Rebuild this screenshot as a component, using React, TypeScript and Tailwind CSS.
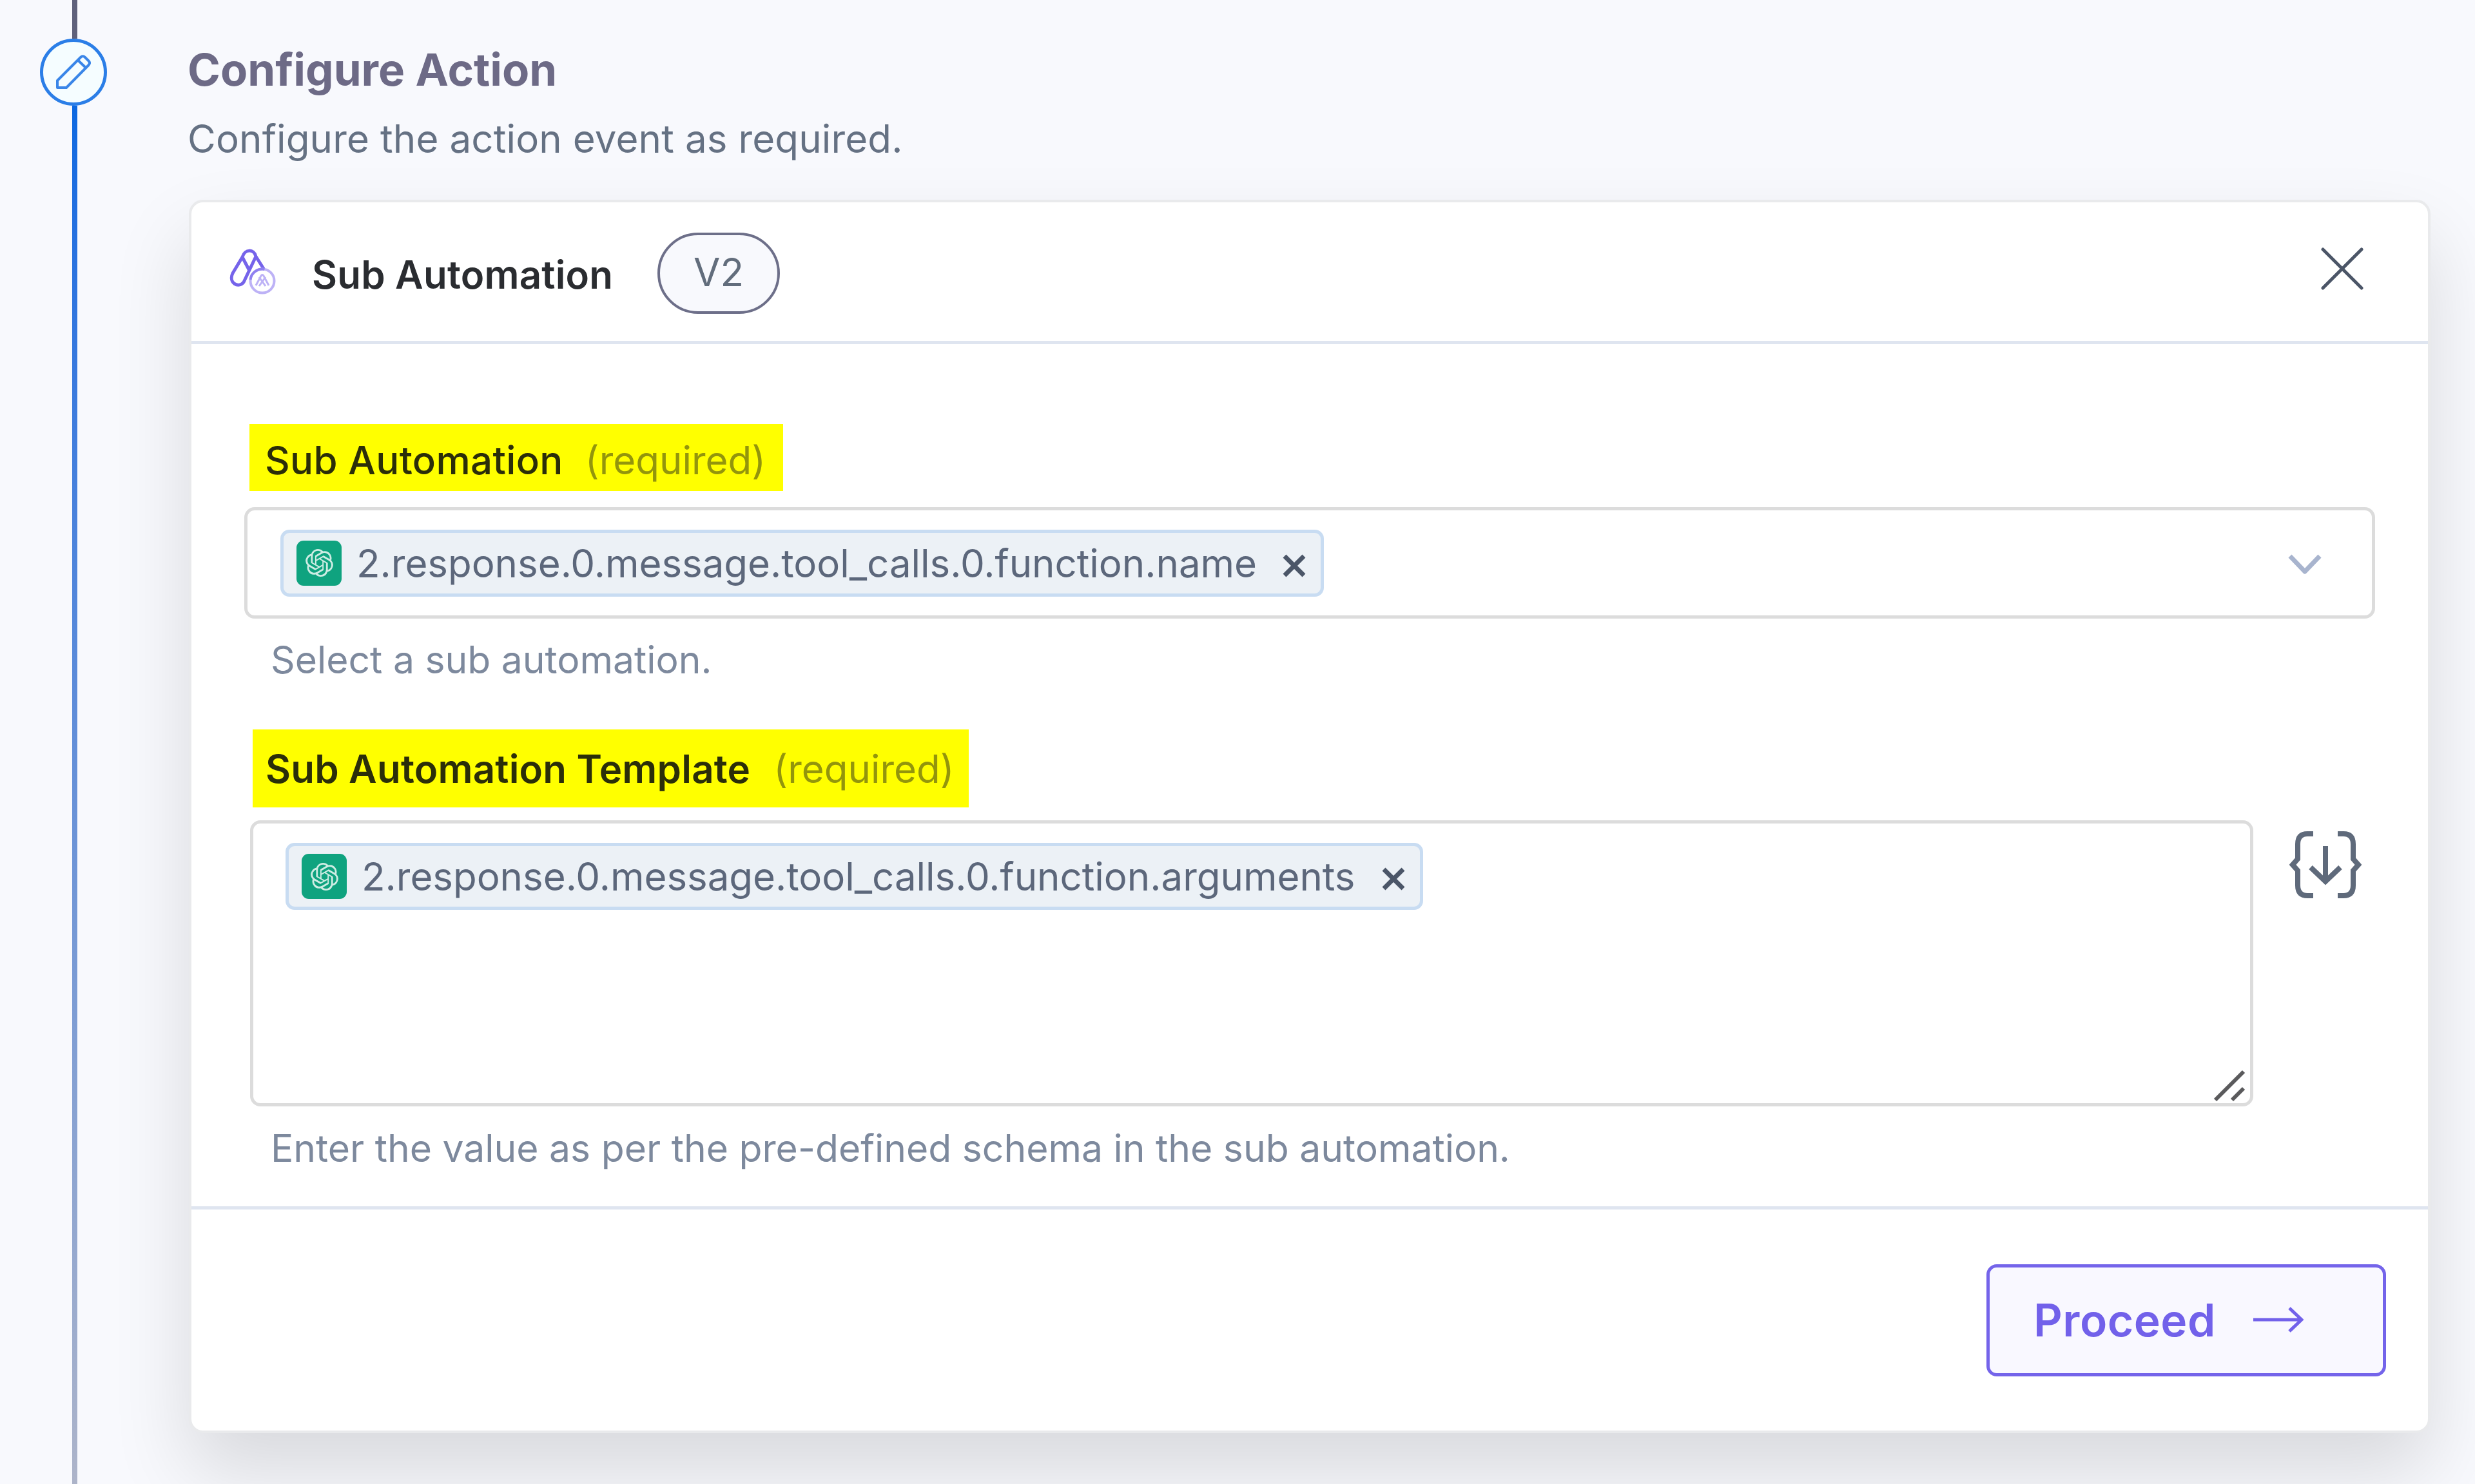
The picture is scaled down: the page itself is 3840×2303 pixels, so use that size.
import React from "react";

function PencilIcon() {
  return (
    <svg viewBox="0 0 54 54" className="h-[54px] w-[54px]" fill="none" stroke="#3a86e8" strokeWidth="4" strokeLinejoin="round">
      <path d="M2 51V40L38 4q3.500-3.500 7 0l5.500 5.500q3 3 0 6.500L16 51Z" />
      <path d="M34 8.500 46 20" />
    </svg>
  );
}

function AutomationIcon() {
  return (
    <svg viewBox="0 0 72 72" className="h-[72px] w-[72px] shrink-0" fill="none" stroke="#7563ea" strokeWidth="5">
      <path d="M20 13C24 0 38 0 41 12L53 31M20 13 5 38C-2 53 14 62 22 52L41 12M20 13 31 34" strokeLinejoin="round" />
      <g stroke="#bdb2f6">
        <circle cx="51" cy="50" r="18.500" strokeWidth="4" />
        <path d="M41 57l8-15q2-3 4 0l8 15M46 44l10 14M56 44l-10 14" strokeWidth="3" />
      </g>
      <path d="M32.500 48a18.500 18.500 0 0 1 22-16" stroke="#8f80f0" strokeWidth="4" />
    </svg>
  );
}

function OpenAIIcon() {
  return (
    <svg viewBox="0 0 24 24" className="h-[43px] w-[43px]" fill="#cdece3">
      <path d="M22.2819 9.8211a5.9847 5.9847 0 0 0-.5157-4.9108 6.0462 6.0462 0 0 0-6.5098-2.9A6.0651 6.0651 0 0 0 4.9807 4.1818a5.9847 5.9847 0 0 0-3.9977 2.9 6.0462 6.0462 0 0 0 .7427 7.0966 5.98 5.98 0 0 0 .511 4.9107 6.051 6.051 0 0 0 6.5146 2.9001A5.9847 5.9847 0 0 0 13.2599 24a6.0557 6.0557 0 0 0 5.7718-4.2058 5.9894 5.9894 0 0 0 3.9977-2.9001 6.0557 6.0557 0 0 0-.7475-7.0729zm-9.022 12.6081a4.4755 4.4755 0 0 1-2.8764-1.0408l.1419-.0804 4.7783-2.7582a.7948.7948 0 0 0 .3927-.6813v-6.7369l2.02 1.1686a.071.071 0 0 1 .038.052v5.5826a4.504 4.504 0 0 1-4.4945 4.4944zm-9.6607-4.1254a4.4708 4.4708 0 0 1-.5346-3.0137l.142.0852 4.783 2.7582a.7712.7712 0 0 0 .7806 0l5.8428-3.3685v2.3324a.0804.0804 0 0 1-.0332.0615L9.74 19.9502a4.4992 4.4992 0 0 1-6.1408-1.6464zM2.3408 7.8956a4.485 4.485 0 0 1 2.3655-1.9728V11.6a.7664.7664 0 0 0 .3879.6765l5.8144 3.3543-2.0201 1.1685a.0757.0757 0 0 1-.071 0l-4.8303-2.7865A4.504 4.504 0 0 1 2.3408 7.872zm16.5963 3.8558L13.1038 8.364 15.1192 7.2a.0757.0757 0 0 1 .071 0l4.8303 2.7913a4.4944 4.4944 0 0 1-.6765 8.1042v-5.6772a.79.79 0 0 0-.407-.667zm2.0107-3.0231l-.142-.0852-4.7735-2.7818a.7759.7759 0 0 0-.7854 0L9.409 9.2297V6.8974a.0662.0662 0 0 1 .0284-.0615l4.8303-2.7866a4.4992 4.4992 0 0 1 6.6802 4.66zM8.3065 12.863l-2.02-1.1638a.0804.0804 0 0 1-.038-.0567V6.0742a4.4992 4.4992 0 0 1 7.3757-3.4537l-.142.0805L8.704 5.459a.7948.7948 0 0 0-.3927.6813zm1.0976-2.3654l2.602-1.4998 2.6069 1.4998v2.9994l-2.5974 1.4997-2.6067-1.4997Z" />
    </svg>
  );
}

function VariableChip({ name, width }: { name: string; width: string }) {
  return (
    <div className={"flex h-[104px] items-center rounded-[14px] border-[5px] border-[#c8dcf2] bg-[#ecf1f6] pl-[20px] " + width}>
      <div className="flex h-[70px] w-[70px] shrink-0 items-center justify-center rounded-[11px] bg-[#0fa37f]">
        <OpenAIIcon />
      </div>
      <span className="ml-[23px] flex-1 whitespace-nowrap text-[60px] leading-[72px] tracking-[-0.03px] text-[#5c677b]">{name}</span>
      <svg viewBox="0 0 36 36" className="mr-[23px] mt-[8px] h-[36px] w-[36px] shrink-0" stroke="#4b5668" strokeWidth="7">
        <path d="M3 3 33 33M33 3 3 33" />
      </svg>
    </div>
  );
}

export default function App() {
  return (
    <div className="flex h-[2303px] w-full overflow-hidden bg-[#f8f9fd] font-['Inter',sans-serif]">
      <aside className="flex w-[293px] shrink-0 flex-col">
        <div className="ml-[112px] h-[60px] w-[8px] bg-[#5f617b]" />
        <div className="ml-[62px] flex h-[104px] w-[104px] shrink-0 items-center justify-center rounded-full border-[5px] border-[#2b7ee7] bg-[#f5fdff]">
          <PencilIcon />
        </div>
        <div className="ml-[112px] w-[8px] flex-1 bg-linear-to-b from-[#0b68e1] to-[#adb4c9]" />
      </aside>

      <main className="flex w-[3478px] shrink-0 flex-col">
        <h1 className="-ml-[2px] mt-[67px] whitespace-nowrap text-[69px] font-bold leading-[82px] text-[#6d6a86]">Configure Action</h1>
        <p className="-ml-[2px] mt-[30px] whitespace-nowrap text-[60px] leading-[72px] tracking-[0.13px] text-[#657183]">Configure the action event as required.</p>

        <section className="mt-[59px] flex h-[1914px] shrink-0 flex-col rounded-[22px] border-[4px] border-[#e9eaec] bg-white shadow-[0_60px_120px_0px_rgba(0,0,0,0.13)]">
          <header className="flex h-[220px] shrink-0 items-center border-b-[5px] border-[#dfe5f0] pl-[59px] pr-[100px]">
            <AutomationIcon />
            <h2 className="ml-[56px] mt-[8px] w-[467px] whitespace-nowrap text-[60px] font-semibold leading-[72px] tracking-[0.2px] text-[#2a2c30]">Sub Automation</h2>
            <span className="ml-[69px] mt-[4px] flex h-[126px] w-[190px] items-center justify-center rounded-full border-[4px] border-[#6d6f89] bg-[#f8f9fd] pb-[4px] text-[60px] leading-[72px] text-[#626d7c]">
              V2
            </span>
            <svg viewBox="0 0 66 66" className="mb-[9px] ml-auto h-[66px] w-[66px]" stroke="#4b5567" strokeWidth="5" strokeLinecap="round">
              <path d="M3 3 63 63M63 3 3 63" />
            </svg>
          </header>

          <div className="flex h-[1343px] shrink-0 flex-col items-start border-b-[5px] border-[#dfe5f0] pl-[82px]">
            <div className="ml-[8px] mt-[124px] flex h-[104px] w-[828px] items-center whitespace-nowrap bg-[#ffff00] pl-[24px] pt-[8px] text-[60px] leading-[72px]">
              <span className="font-medium tracking-[0.35px] text-[#2b2e09]">Sub Automation</span>
              <span className="ml-[34px] text-[#93950c]">(required)</span>
            </div>
            <div className="mt-[25px] flex h-[173px] w-[3306px] items-center rounded-[16px] border-[5px] border-[#dcdcdc] pl-[51px] pr-[78px]">
              <VariableChip name="2.response.0.message.tool_calls.0.function.name" width="w-[1619px]" />
              <svg viewBox="0 0 52 34" className="ml-auto mt-[5px] h-[34px] w-[52px]" fill="none" stroke="#a8b4ce" strokeWidth="7">
                <path d="M3 4 26 28 49 4" strokeLinejoin="round" />
              </svg>
            </div>
            <p className="ml-[41px] mt-[28px] whitespace-nowrap text-[58.8px] leading-[72px] text-[#7d899d]">Select a sub automation.</p>
            <div className="ml-[13px] mt-[72px] flex h-[121px] w-[1111px] items-center whitespace-nowrap bg-[#ffff00] pl-[20px] text-[60px] leading-[72px]">
              <span className="font-semibold tracking-[0.2px] text-[#2b2e09]">Sub Automation Template</span>
              <span className="ml-[36px] text-[#93950c]">(required)</span>
            </div>
            <div className="ml-[9px] mt-[20px] flex">
              <div className="flex h-[444px] w-[3108px] flex-col justify-between rounded-[16px] border-[5px] border-[#dcdcdc] pl-[50px] pr-[7px] pt-[30px]">
                <VariableChip name="2.response.0.message.tool_calls.0.function.arguments" width="w-[1765px]" />
                <svg viewBox="0 0 50 50" className="mb-[2px] h-[50px] w-[50px] self-end" stroke="#5a5a5c" strokeWidth="6">
                  <path d="M3 47 47 3M29 47 47 29" />
                </svg>
              </div>
              <svg viewBox="0 0 112 104" className="ml-[56px] mt-[17px] h-[104px] w-[112px]" fill="none" stroke="#5f6a7b" strokeWidth="8">
                <path d="M37 4H28Q13 4 13 20V43L5 52 13 61V84Q13 100 28 100H37" />
                <path d="M75 4H84Q99 4 99 20V43L107 52 99 61V84Q99 100 84 100H75" />
                <path d="M56 23V78M33 56 56 78 79 56" />
              </svg>
            </div>
            <p className="ml-[41px] mt-[29px] whitespace-nowrap text-[58.8px] leading-[72px] text-[#7d899d]">
              Enter the value as per the pre-defined schema in the sub automation.
            </p>
          </div>

          <footer className="flex justify-end pr-[65px] pt-[85px]">
            <button className="flex h-[174px] w-[620px] items-center rounded-[16px] border-[5px] border-[#7464ea] bg-[#f9f8ff] pl-[68px] text-[#7261ea]">
              <span className="whitespace-nowrap text-[69.5px] font-semibold leading-[82px] tracking-[0.5px]">Proceed</span>
              <svg viewBox="0 0 78 42" className="ml-[58px] h-[42px] w-[78px]" fill="none" stroke="currentColor" strokeWidth="5">
                <path d="M0 20H75M56 2 75 20 56 38" />
              </svg>
            </button>
          </footer>
        </section>
      </main>
    </div>
  );
}
